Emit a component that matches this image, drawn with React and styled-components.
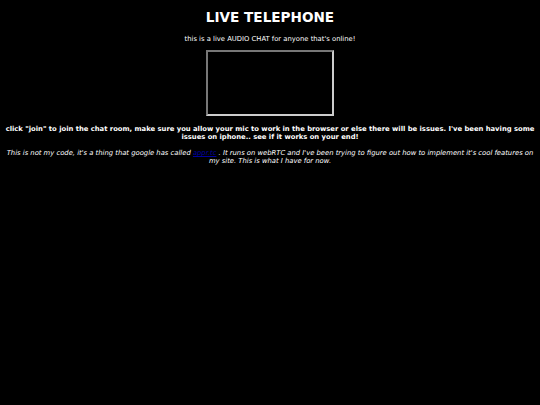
import React from "react";
import styled, { createGlobalStyle } from "styled-components";

const Global = createGlobalStyle`
  html, body { margin: 0; padding: 0; background: #000; }
  body { font-family: "DejaVu Sans", Verdana, sans-serif; color: #fff; }
`;

const Page = styled.div`
  display: flex;
  flex-direction: column;
  align-items: center;
  text-align: center;
  padding: 9px 5px 0;
  min-height: 405px;
  box-sizing: border-box;
`;

const Title = styled.h1`
  margin: 0;
  font-size: 13.6px;
  font-weight: bold;
  line-height: 16px;
`;

const Subtitle = styled.p`
  margin: 10px 0 0;
  font-size: 6.8px;
  line-height: 9px;
`;

const Frame = styled.div`
  margin-top: 6px;
  width: 124px;
  height: 62px;
  border: 2px solid;
  border-color: #777 #ccc #ccc #777;
  background: #000;
`;

const Notice = styled.p`
  margin: 9px 0 0;
  font-size: 6.8px;
  line-height: 8px;
  font-weight: bold;
`;

const Note = styled.p`
  margin: 8px 0 0;
  font-size: 6.8px;
  line-height: 8px;
  font-style: italic;
`;

const Link = styled.a`
  color: #0000a0;
  text-decoration: underline;
`;

export default function App() {
  return (
    <>
      <Global />
      <Page>
        <Title>LIVE TELEPHONE</Title>
        <Subtitle>this is a live AUDIO CHAT for anyone that's online!</Subtitle>
        <Frame />
        <Notice>
          click "join" to join the chat room, make sure you allow your mic to work in the browser or else there will be issues. I've been having some issues on iphone.. see if it works on your end!
        </Notice>
        <Note>
          This is not my code, it's a thing that google has called <Link href="#">appr.tc</Link> . It runs on webRTC and I've been trying to figure out how to implement it's cool features on my site. This is what I have for now.
        </Note>
      </Page>
    </>
  );
}
